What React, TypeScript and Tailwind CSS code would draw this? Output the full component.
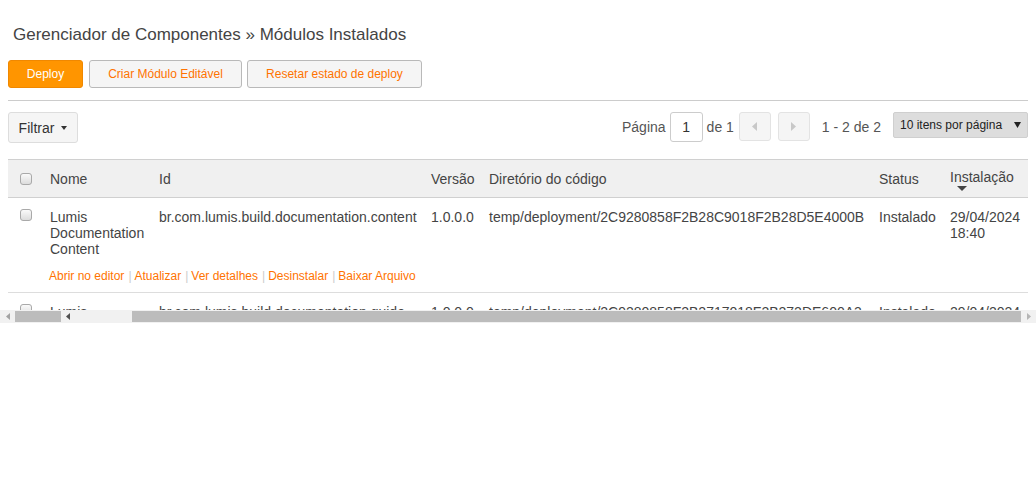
import React from "react";

function Check() {
  return (
    <div className="w-[12px] h-[12px] rounded-[3px] border border-[#a9a9a9] bg-gradient-to-b from-[#fafafa] to-[#dcdcdc]" />
  );
}

export default function App() {
  const orange = "text-[#ff7300]";
  return (
    <div className="w-[1036px] h-[481px] bg-white text-[#444] font-['Liberation_Sans',Arial,sans-serif] overflow-hidden">
      <h1 className="pt-[25px] pl-[13px] text-[17px] leading-[20px] text-[#444]">
        Gerenciador de Componentes » Módulos Instalados
      </h1>
      <div className="mt-[15px] px-[8px] flex gap-[6px] text-[12px]">
        <button className="w-[75px] h-[28px] rounded-[3px] border border-[#f08800] bg-[#ff9500] text-white">
          Deploy
        </button>
        <button className={`w-[153px] h-[28px] rounded-[3px] border border-[#b9b9b9] bg-[#f5f5f5] ${orange}`}>
          Criar Módulo Editável
        </button>
        <button className={`w-[175px] h-[28px] rounded-[3px] border border-[#b9b9b9] bg-[#f5f5f5] ${orange} ml-[-1px]`}>
          Resetar estado de deploy
        </button>
      </div>
      <div className="mt-[12px] mx-[8px] h-px bg-[#ccc]" />
      <div className="mt-[11px] mx-[8px] flex items-start justify-between">
        <button className="w-[70px] h-[31px] rounded-[3px] border border-[#ddd] bg-[#f5f5f5] text-[14px] text-[#333] flex items-center justify-center gap-[7px] pt-[1px]">
          <span>Filtrar</span>
          <svg width="6" height="4" viewBox="0 0 6 4"><path d="M0 0h6L3 4z" fill="#333" /></svg>
        </button>
        <div className="flex items-start text-[14px] text-[#555]">
          <span className="leading-[30px]">Página</span>
          <div className="ml-[4px] w-[33px] h-[30px] rounded-[3px] border border-[#ccc] flex items-center justify-center text-[#333]">1</div>
          <span className="ml-[4px] leading-[30px]">de 1</span>
          <div className="ml-[5px] w-[32px] h-[29px] rounded-[3px] border border-[#e3e3e3] bg-[#f5f5f5] flex items-center justify-center">
            <svg width="5" height="9" viewBox="0 0 5 9"><path d="M5 0v9L0 4.5z" fill="#c8c8c8" /></svg>
          </div>
          <div className="ml-[7px] w-[32px] h-[29px] rounded-[3px] border border-[#e3e3e3] bg-[#f5f5f5] flex items-center justify-center">
            <svg width="5" height="9" viewBox="0 0 5 9"><path d="M0 0v9L5 4.5z" fill="#c8c8c8" /></svg>
          </div>
          <span className="ml-[12px] leading-[30px]">1 - 2 de 2</span>
          <div className="ml-[12px] w-[135px] h-[26px] rounded-[2px] border border-[#cfcfcf] bg-[#ddd] flex items-center justify-between pl-[6px] pr-[6px] text-[12px] text-[#222]">
            <span>10 itens por página</span>
            <svg width="7" height="6" viewBox="0 0 7 6"><path d="M0 0h7L3.5 6z" fill="#222" /></svg>
          </div>
        </div>
      </div>
      <div className="mt-[16px] mx-[8px] h-[151px] overflow-hidden">
        <table className="table-fixed w-[1020px] border-collapse text-[14px] leading-[16px] text-[#444]">
          <colgroup>
            <col className="w-[34px]" />
            <col className="w-[109px]" />
            <col className="w-[272px]" />
            <col className="w-[58px]" />
            <col className="w-[390px]" />
            <col className="w-[71px]" />
            <col className="w-[86px]" />
          </colgroup>
          <thead>
            <tr className="bg-[#f0f0f0] border-t border-b border-[#d0d0d0] h-[38px]">
              <th className="pl-[12px] align-middle font-normal text-left">
                <div className="mt-[1px]"><Check /></div>
              </th>
              <th className="pl-[8px] font-normal text-left">Nome</th>
              <th className="pl-[8px] font-normal text-left">Id</th>
              <th className="pl-[8px] font-normal text-left">Versão</th>
              <th className="pl-[8px] font-normal text-left">Diretório do código</th>
              <th className="pl-[8px] font-normal text-left">Status</th>
              <th className="pl-[8px] font-normal text-left align-top pt-[9px]">
                <div>Instalação</div>
                <div className="pl-[7px] mt-[1px]">
                  <svg width="10" height="5" viewBox="0 0 10 5" className="block"><path d="M0 0h10L5 5z" fill="#444" /></svg>
                </div>
              </th>
            </tr>
          </thead>
          <tbody>
            <tr>
              <td className="pl-[12px] pt-[11px] align-top"><Check /></td>
              <td className="pl-[8px] pt-[11px] align-top">Lumis Documentation Content</td>
              <td className="pl-[8px] pt-[11px] align-top whitespace-nowrap">br.com.lumis.build.documentation.content</td>
              <td className="pl-[8px] pt-[11px] align-top">1.0.0.0</td>
              <td className="pl-[8px] pt-[11px] align-top whitespace-nowrap">temp/deployment/2C9280858F2B28C9018F2B28D5E4000B</td>
              <td className="pl-[8px] pt-[11px] align-top">Instalado</td>
              <td className="pl-[8px] pt-[11px] align-top">29/04/2024 18:40</td>
            </tr>
            <tr className="border-b border-[#ddd]">
              <td />
              <td colSpan={6} className={`pl-[7px] pt-[11px] pb-[8px] text-[12px] leading-[16px] ${orange} whitespace-nowrap`}>
                Abrir no editor<span className="text-[#ccc] ml-[4px] mr-[3px]">|</span>Atualizar<span className="text-[#ccc] ml-[4px] mr-[3px]">|</span>Ver detalhes<span className="text-[#ccc] ml-[4px] mr-[3px]">|</span>Desinstalar<span className="text-[#ccc] ml-[4px] mr-[3px]">|</span>Baixar Arquivo
              </td>
            </tr>
            <tr>
              <td className="pl-[12px] pt-[11px] align-top"><Check /></td>
              <td className="pl-[8px] pt-[11px] align-top">Lumis Documentation Guide</td>
              <td className="pl-[8px] pt-[11px] align-top whitespace-nowrap">br.com.lumis.build.documentation.guide</td>
              <td className="pl-[8px] pt-[11px] align-top">1.0.0.0</td>
              <td className="pl-[8px] pt-[11px] align-top whitespace-nowrap">temp/deployment/2C9280858F2B2717018F2B272DE600A3</td>
              <td className="pl-[8px] pt-[11px] align-top">Instalado</td>
              <td className="pl-[8px] pt-[11px] align-top">29/04/2024 18:39</td>
            </tr>
          </tbody>
        </table>
      </div>
      <div className="h-[13px] w-[1036px] bg-[#f1f1f1] flex items-center">
        <div className="w-[15px] flex justify-center">
          <svg width="4" height="7" viewBox="0 0 4 7"><path d="M4 0v7L0 3.5z" fill="#a3a3a3" /></svg>
        </div>
        <div className="w-[46px] h-[11px] bg-[#bcbcbc]" />
        <div className="w-[71px] pl-[5px] flex">
          <svg width="4" height="7" viewBox="0 0 4 7"><path d="M4 0v7L0 3.5z" fill="#505050" /></svg>
        </div>
        <div className="w-[889px] h-[11px] bg-[#bcbcbc]" />
        <div className="flex-1 flex justify-center">
          <svg width="4" height="7" viewBox="0 0 4 7"><path d="M0 0v7L4 3.5z" fill="#b5b5b5" /></svg>
        </div>
      </div>
    </div>
  );
}
